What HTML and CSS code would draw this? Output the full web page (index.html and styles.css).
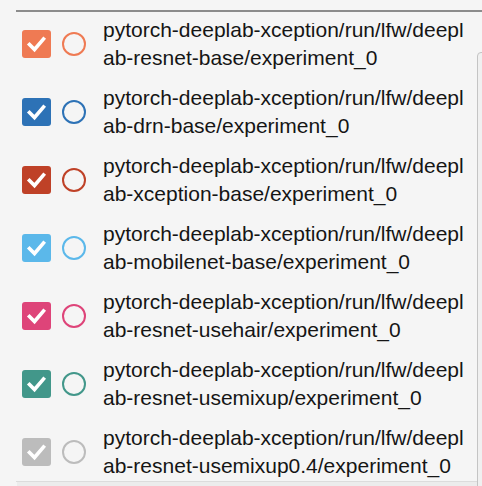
FILE: index.html
```html
<!DOCTYPE html>
<html>
<head>
<meta charset="utf-8">
<link rel="stylesheet" href="styles.css">
</head>
<body>
<div class="panel">
  <div class="divider"></div>
  <div class="viewport">
    <div class="rows">
      <div class="row" style="--c:#ef7a53">
        <span class="check"><svg viewBox="0 0 29 28" width="29" height="28"><path d="M7.5 14.5 L12.5 19.5 L21.5 9" fill="none" stroke="#fff" stroke-width="3.6" stroke-linecap="square"/></svg></span>
        <span class="radio"></span>
        <span class="name">pytorch-deeplab-xception/run/lfw/deeplab-resnet-base/experiment_0</span>
      </div>
      <div class="row" style="--c:#2d72b6">
        <span class="check"><svg viewBox="0 0 29 28" width="29" height="28"><path d="M7.5 14.5 L12.5 19.5 L21.5 9" fill="none" stroke="#fff" stroke-width="3.6" stroke-linecap="square"/></svg></span>
        <span class="radio"></span>
        <span class="name">pytorch-deeplab-xception/run/lfw/deeplab-drn-base/experiment_0</span>
      </div>
      <div class="row" style="--c:#bf4127">
        <span class="check"><svg viewBox="0 0 29 28" width="29" height="28"><path d="M7.5 14.5 L12.5 19.5 L21.5 9" fill="none" stroke="#fff" stroke-width="3.6" stroke-linecap="square"/></svg></span>
        <span class="radio"></span>
        <span class="name">pytorch-deeplab-xception/run/lfw/deeplab-xception-base/experiment_0</span>
      </div>
      <div class="row" style="--c:#5bb8ea">
        <span class="check"><svg viewBox="0 0 29 28" width="29" height="28"><path d="M7.5 14.5 L12.5 19.5 L21.5 9" fill="none" stroke="#fff" stroke-width="3.6" stroke-linecap="square"/></svg></span>
        <span class="radio"></span>
        <span class="name">pytorch-deeplab-xception/run/lfw/deeplab-mobilenet-base/experiment_0</span>
      </div>
      <div class="row" style="--c:#de4479">
        <span class="check"><svg viewBox="0 0 29 28" width="29" height="28"><path d="M7.5 14.5 L12.5 19.5 L21.5 9" fill="none" stroke="#fff" stroke-width="3.6" stroke-linecap="square"/></svg></span>
        <span class="radio"></span>
        <span class="name">pytorch-deeplab-xception/run/lfw/deeplab-resnet-usehair/experiment_0</span>
      </div>
      <div class="row" style="--c:#42978a">
        <span class="check"><svg viewBox="0 0 29 28" width="29" height="28"><path d="M7.5 14.5 L12.5 19.5 L21.5 9" fill="none" stroke="#fff" stroke-width="3.6" stroke-linecap="square"/></svg></span>
        <span class="radio"></span>
        <span class="name">pytorch-deeplab-xception/run/lfw/deeplab-resnet-usemixup/experiment_0</span>
      </div>
      <div class="row" style="--c:#bcbcbc">
        <span class="check"><svg viewBox="0 0 29 28" width="29" height="28"><path d="M7.5 14.5 L12.5 19.5 L21.5 9" fill="none" stroke="#fff" stroke-width="3.6" stroke-linecap="square"/></svg></span>
        <span class="radio"></span>
        <span class="name">pytorch-deeplab-xception/run/lfw/deeplab-resnet-usemixup0.4/experiment_0</span>
      </div>
    </div>
  </div>
  <div class="hscroll"></div>
  <div class="vthumb"></div>
</div>
</body>
</html>
```
FILE: styles.css
```css
html, body {
  margin: 0;
  padding: 0;
  background: #f5f5f5;
}
body {
  font-family: "Liberation Sans", Arial, Helvetica, sans-serif;
  color: #151515;
  width: 482px;
  height: 486px;
  overflow: hidden;
}
.panel {
  position: relative;
  padding-left: 16px;
  height: 486px;
  box-sizing: border-box;
}
.divider {
  margin-top: 10px;
  height: 2px;
  background: #8c8c8c;
}
.viewport {
  margin-top: 11px;
  height: 458px;
  overflow: hidden;
  border-bottom: 1px solid #dcdcdc;
}
.rows {
  margin-top: -7px;
  display: flex;
  flex-direction: column;
  gap: 12px;
}
.row {
  display: flex;
  align-items: center;
  height: 56px;
  padding-left: 6px;
}
.check {
  flex: none;
  width: 29px;
  height: 28px;
  border-radius: 3px;
  background: var(--c);
  display: flex;
}
.radio {
  flex: none;
  width: 20px;
  height: 20px;
  border: 2px solid var(--c);
  border-radius: 50%;
  margin-left: 11px;
}
.name {
  margin-left: 17px;
  width: 370px;
  font-size: 21px;
  line-height: 28px;
  word-break: break-all;
}
.hscroll {
  height: 4px;
  background: #ececec;
  margin-left: 1px;
}
.vthumb {
  position: absolute;
  left: 477px;
  top: 42px;
  width: 10px;
  height: 438px;
  background: #f0f0f0;
  border: 1px solid #c4c4c4;
  border-radius: 4px 0 0 0;
}
```
